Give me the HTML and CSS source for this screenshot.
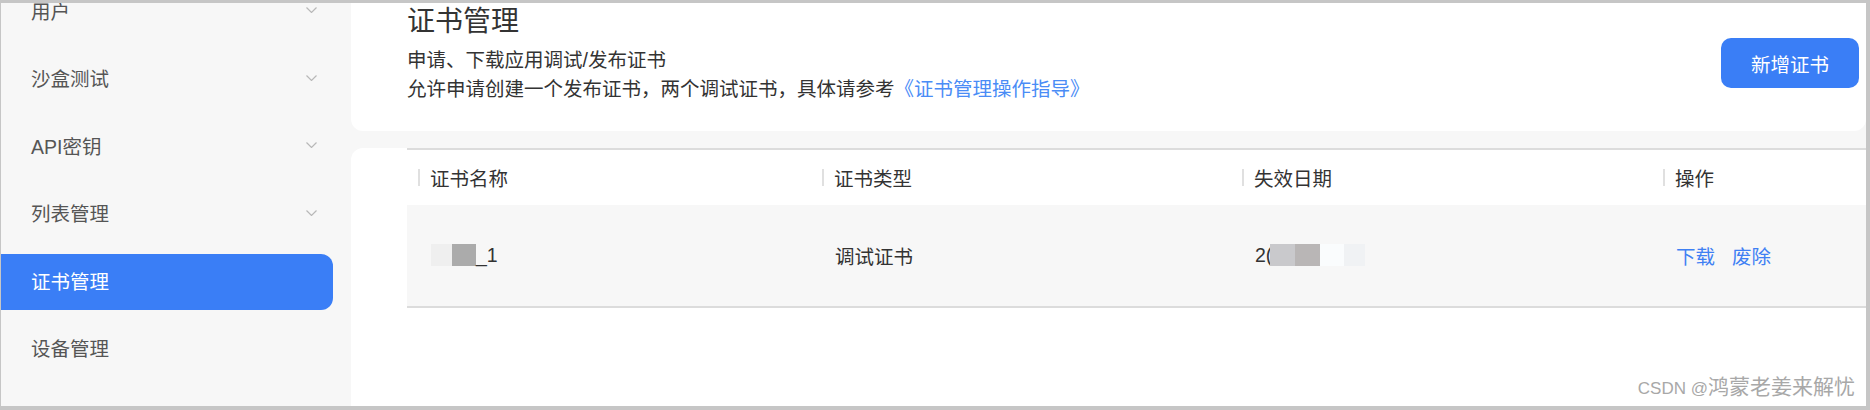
FILE: index.html
```html
<!DOCTYPE html>
<html lang="zh-CN">
<head>
    <meta charset="UTF-8">
    <meta name="viewport" content="width=device-width, initial-scale=1.0">
    <title>证书管理</title>
    <link rel="stylesheet" href="styles.css">
</head>
<body>
    <div class="frame">
        <aside class="sidebar">
            <ul class="menu">
                <li class="menu-item">
                    <span>用户</span>
                    <svg class="chevron" width="11" height="6" viewBox="0 0 11 6"><polyline points="0.5,0.5 5.5,5.5 10.5,0.5"/></svg>
                </li>
                <li class="menu-item">
                    <span>沙盒测试</span>
                    <svg class="chevron" width="11" height="6" viewBox="0 0 11 6"><polyline points="0.5,0.5 5.5,5.5 10.5,0.5"/></svg>
                </li>
                <li class="menu-item">
                    <span>API密钥</span>
                    <svg class="chevron" width="11" height="6" viewBox="0 0 11 6"><polyline points="0.5,0.5 5.5,5.5 10.5,0.5"/></svg>
                </li>
                <li class="menu-item">
                    <span>列表管理</span>
                    <svg class="chevron" width="11" height="6" viewBox="0 0 11 6"><polyline points="0.5,0.5 5.5,5.5 10.5,0.5"/></svg>
                </li>
                <li class="menu-item active">
                    <span>证书管理</span>
                </li>
                <li class="menu-item">
                    <span>设备管理</span>
                </li>
            </ul>
        </aside>

        <main class="main">
            <section class="card intro">
                <div class="intro-text">
                    <h1 class="title">证书管理</h1>
                    <p class="desc">
                        申请、下载应用调试/发布证书<br>
                        允许申请创建一个发布证书，两个调试证书，具体请参考<a class="guide-link" href="#">《证书管理操作指导》</a>
                    </p>
                </div>
                <button class="add-btn">新增证书</button>
            </section>

            <section class="card list">
                <div class="table">
                    <div class="row head">
                        <div class="cell">证书名称</div>
                        <div class="cell">证书类型</div>
                        <div class="cell">失效日期</div>
                        <div class="cell">操作</div>
                    </div>
                    <div class="row body">
                        <div class="cell"><span class="blur b1"></span><span class="blur b2"></span>_1</div>
                        <div class="cell">调试证书</div>
                        <div class="cell">2(<span class="blur d1"></span><span class="blur d2"></span><span class="blur d3"></span><span class="blur d4"></span></div>
                        <div class="cell actions">
                            <a href="#">下载</a>
                            <a href="#">废除</a>
                        </div>
                    </div>
                </div>
            </section>
        </main>

        <div class="watermark">CSDN @<span class="wm-name">鸿蒙老姜来解忧</span></div>
    </div>
</body>
</html>
```

FILE: styles.css
```css
body {
    margin: 0;
    font-family: "Liberation Sans", "Noto Sans CJK SC", sans-serif;
    color: #333;
}

.frame {
    position: relative;
    box-sizing: border-box;
    width: 1870px;
    height: 410px;
    border-style: solid;
    border-color: #c6c6c6;
    border-width: 3px 4px 4px 1px;
    background-color: #f7f7f7;
    display: flex;
    overflow: hidden;
}

/* sidebar */
.sidebar {
    width: 350px;
    flex: none;
}

.menu {
    list-style: none;
    margin: -19px 0 0;
    padding: 0;
    display: flex;
    flex-direction: column;
    gap: 11.5px;
}

.menu-item {
    box-sizing: border-box;
    width: 332px;
    height: 56px;
    padding: 0 16px 4px 30px;
    display: flex;
    align-items: center;
    justify-content: space-between;
    font-size: 19.5px;
    color: #555;
}

.menu-item.active {
    background-color: #3a7ef6;
    color: #fff;
    border-radius: 0 12px 12px 0;
}

.chevron {
    fill: none;
    stroke: #b8b8b8;
    stroke-width: 1.2;
}

/* main */
.main {
    flex: 1;
    display: flex;
    flex-direction: column;
    gap: 17px;
}

.card {
    background-color: #fff;
}

.intro {
    display: flex;
    justify-content: space-between;
    align-items: flex-start;
    padding: 3px 7px 26.5px 56px;
    border-radius: 0 0 12px 12px;
}

.title {
    margin: 0 0 8px;
    font-size: 28px;
    line-height: 32px;
    font-weight: normal;
    color: #333;
}

.desc {
    margin: 0;
    font-size: 19.5px;
    line-height: 29px;
    color: #333;
}

.guide-link {
    color: #4a8cf6;
    text-decoration: none;
}

.add-btn {
    margin-top: 32px;
    width: 138px;
    height: 50px;
    border: none;
    border-radius: 10px;
    background-color: #3a7ef6;
    color: #fff;
    font-family: inherit;
    font-size: 19.5px;
    cursor: pointer;
}

/* table */
.list {
    flex: 1;
    padding-left: 56px;
    border-radius: 12px 0 0 0;
}

.table {
    border-top: 2px solid #dcdcdc;
    border-bottom: 2px solid #dcdcdc;
    font-size: 19.5px;
}

.row {
    display: grid;
    grid-template-columns: 404px 420px 421px 1fr;
}

.row.head {
    height: 55px;
}

.row.body {
    height: 101px;
    background-color: #f7f7f7;
}

.cell {
    display: flex;
    align-items: center;
}

.head .cell {
    padding-left: 11px;
}

.head .cell::before {
    content: "";
    width: 2px;
    height: 17px;
    margin-right: 10px;
    background-color: #e0e0e0;
}

.body .cell {
    padding-left: 24px;
}

.blur {
    display: inline-block;
    height: 22px;
}

.b1 { width: 21px; background-color: #efefef; }
.b2 { width: 24px; background-color: #ababab; }
.d1 { width: 25px; background-color: #c9c9cc; margin-left: -2px; }
.d2 { width: 25px; background-color: #b9b6b6; }
.d3 { width: 24px; background-color: #fafcfd; }
.d4 { width: 21px; background-color: #f0f2f4; }

.actions {
    gap: 17px;
}

.actions a {
    color: #3f80f3;
    text-decoration: none;
}

/* watermark */
.watermark {
    position: absolute;
    right: 11px;
    bottom: 5px;
    line-height: 24px;
    font-size: 17px;
    color: #a8a8a8;
    text-shadow: 0 0 1px #fff, 1px 1px 0 #fff;
}

.wm-name {
    font-size: 21px;
}
```
